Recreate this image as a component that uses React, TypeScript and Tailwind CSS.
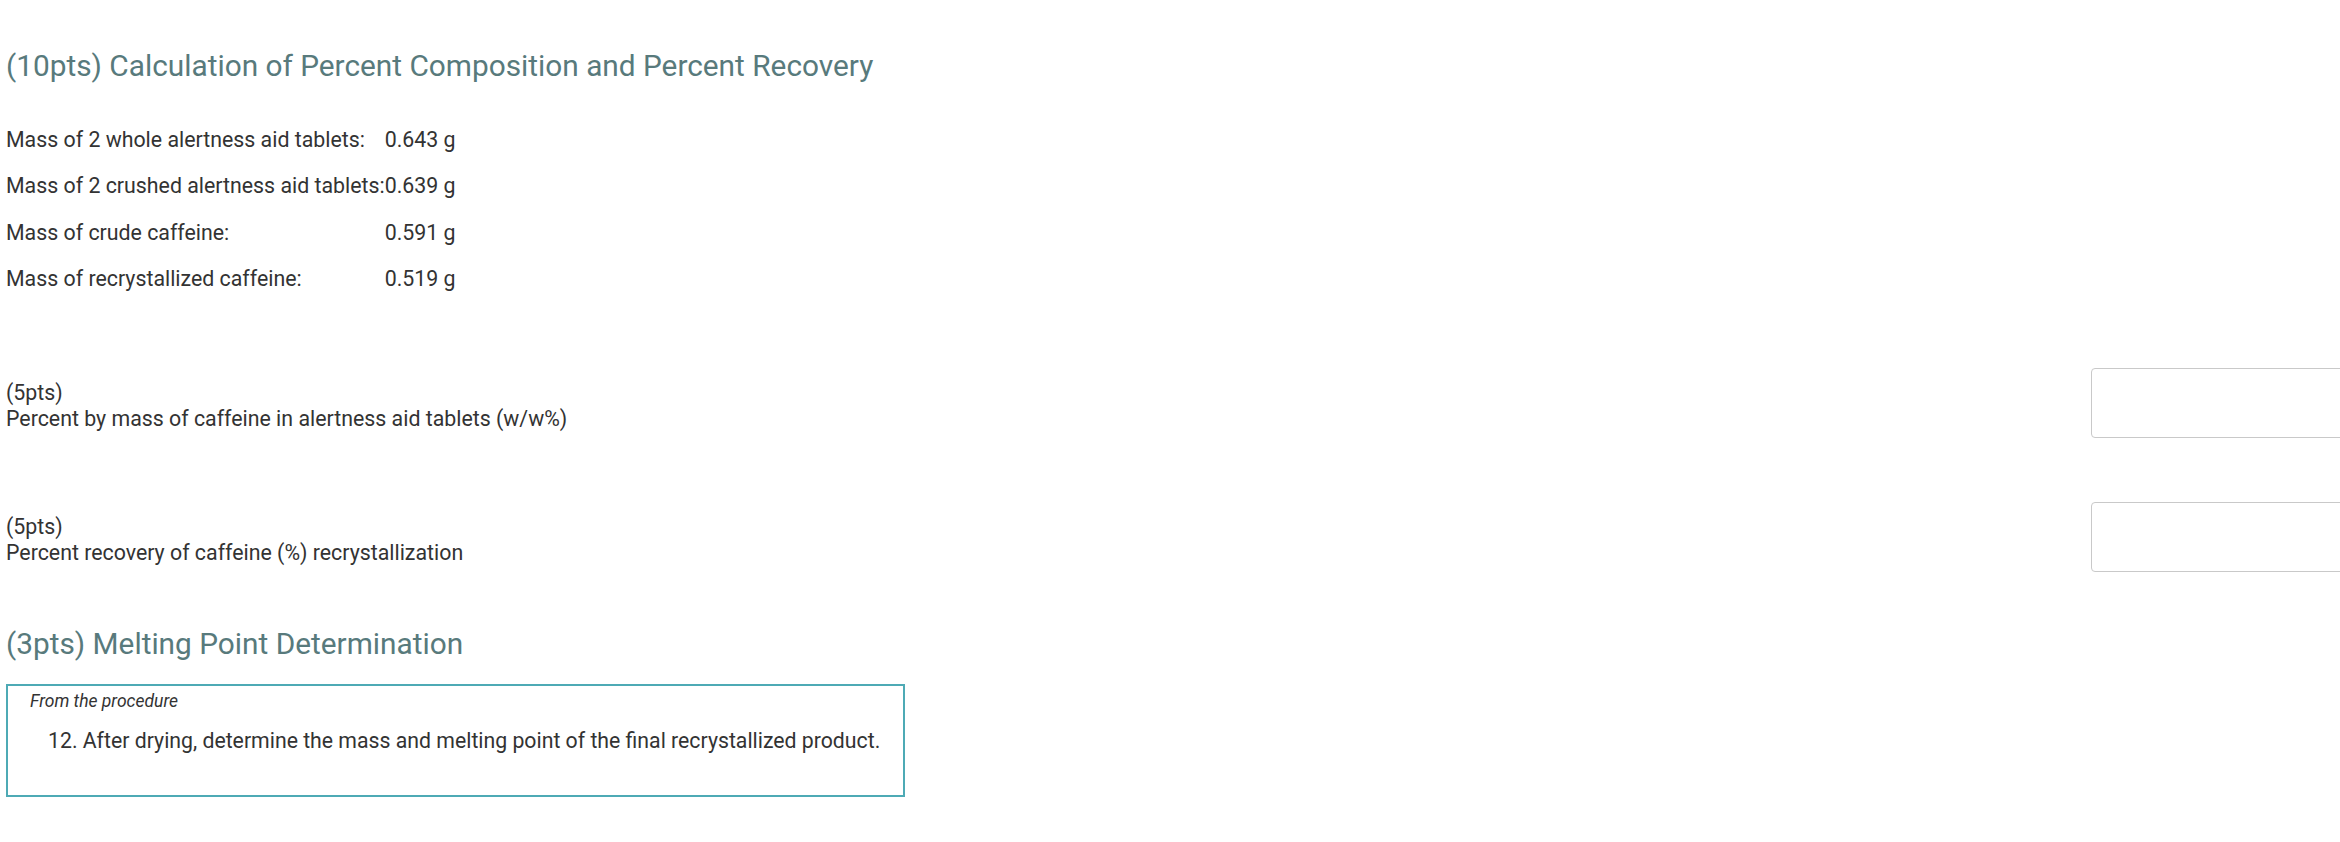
import React from "react";

const rows: [string, string][] = [
  ["Mass of 2 whole alertness aid tablets:", "0.643 g"],
  ["Mass of 2 crushed alertness aid tablets:", "0.639 g"],
  ["Mass of crude caffeine:", "0.591 g"],
  ["Mass of recrystallized caffeine:", "0.519 g"],
];

function AnswerRow({ label, top }: { label: string; top: string }) {
  return (
    <div className={`flex items-center ${top}`}>
      <div className="w-[2085px] shrink-0 text-[21.33px] leading-[26px] text-[#333333] pt-[5px]">
        <div>(5pts)</div>
        <div>{label}</div>
      </div>
      <div className="h-[70px] w-[300px] shrink-0 rounded-[4px] border border-[#c9c9c9] bg-white" />
    </div>
  );
}

export default function App() {
  return (
    <div
      className="w-full h-[842px] overflow-hidden bg-white"
      style={{ fontFamily: "Roboto, 'Noto Sans', sans-serif" }}
    >
      <div className="pl-[6px] flex flex-col">
        <h1 className="mt-[48px] text-[29.8px] leading-[36px] font-normal text-[#587a7c]">
          (10pts) Calculation of Percent Composition and Percent Recovery
        </h1>
        <div className="mt-[33px] grid w-fit grid-cols-[max-content_max-content] text-[21.33px] text-[#333333]">
          {rows.map(([l, v]) => (
            <React.Fragment key={l}>
              <div className="h-[46.3px] leading-[46.3px]">{l}</div>
              <div className="h-[46.3px] leading-[46.3px]">{v}</div>
            </React.Fragment>
          ))}
        </div>
        <AnswerRow
          top="mt-[66px]"
          label="Percent by mass of caffeine in alertness aid tablets (w/w%)"
        />
        <AnswerRow
          top="mt-[64px]"
          label="Percent recovery of caffeine (%) recrystallization"
        />
        <h2 className="mt-[54px] text-[29.8px] leading-[36px] font-normal text-[#587a7c]">
          (3pts) Melting Point Determination
        </h2>
        <div className="mt-[22px] w-[899px] h-[113px] border-2 border-[#4eaab5] pl-[22px] pt-[4px]">
          <p className="text-[17.5px] leading-[22px] italic text-[#333333]">From the procedure</p>
          <p className="mt-[16px] ml-[18px] text-[21.25px] leading-[26px] text-[#333333]">
            12. After drying, determine the mass and melting point of the final recrystallized product.
          </p>
        </div>
      </div>
    </div>
  );
}
